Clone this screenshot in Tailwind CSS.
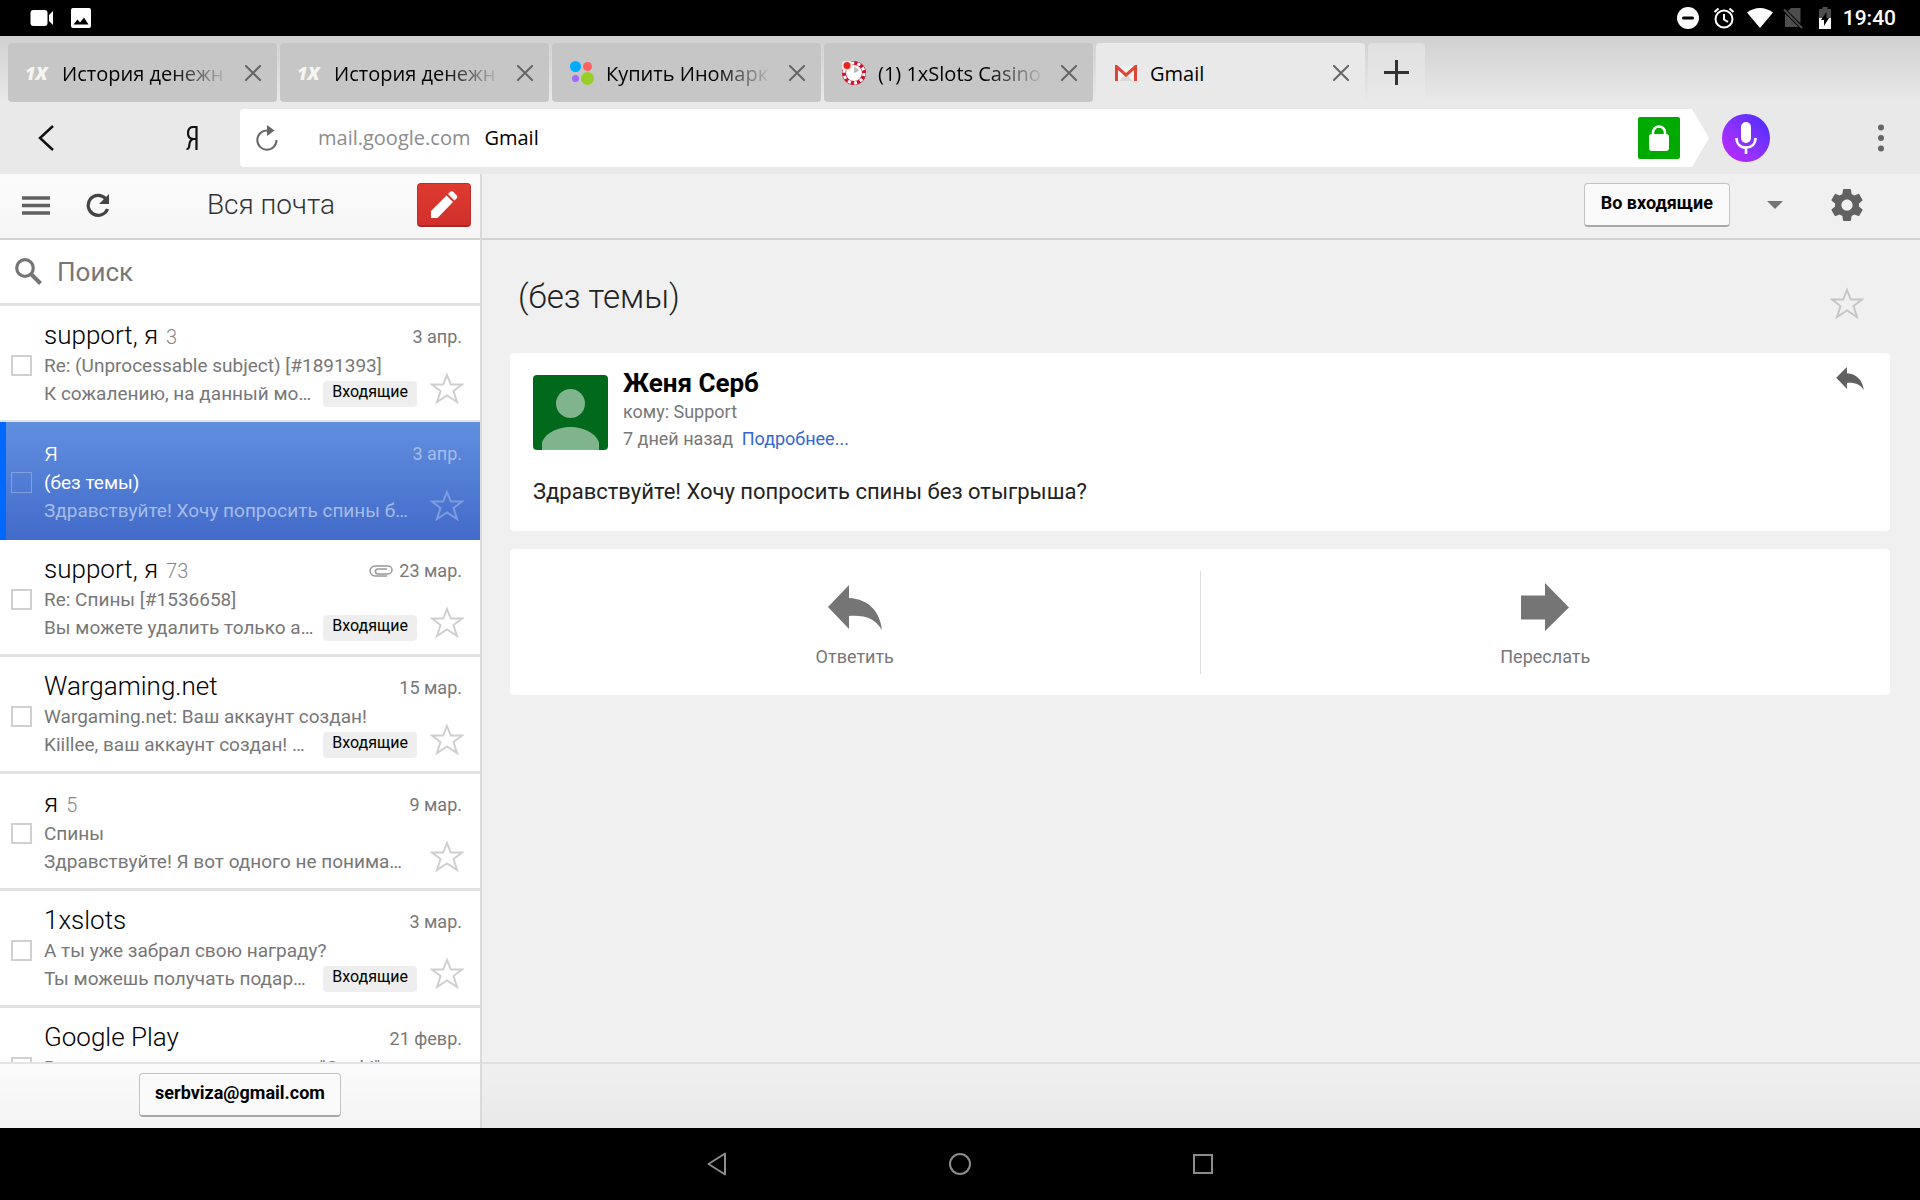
<!DOCTYPE html>
<html lang="ru">
<head>
    <meta charset="UTF-8">
    <meta name="viewport" content="width=device-width, initial-scale=1.0">
    <title>Gmail</title>
    <script src="https://cdn.jsdelivr.net/npm/@tailwindcss/browser@4"></script>
</head>
<body class="h-screen flex flex-col overflow-hidden bg-[#f0f0f0] font-['Roboto',sans-serif] text-black">

    <!-- Status bar -->
    <div class="h-9 shrink-0 bg-black text-white flex items-center justify-between pl-[30px] pr-6">
        <div class="flex items-center gap-[17px]">
            <svg class="w-6 h-4" viewBox="0 0 24 16" fill="#fff"><rect x="0.5" y="0" width="17" height="16" rx="3"/><path d="M19 5l4-4v14l-4-4z"/></svg>
            <svg class="w-5 h-5" viewBox="0 0 20 20"><rect width="20" height="20" rx="2" fill="#fff"/><path d="M2.500 16.500l4-5 2.500 3 4-5 4.500 7z" fill="#000"/></svg>
        </div>
        <div class="flex items-center">
            <svg class="w-[22px] h-[22px]" viewBox="0 0 22 22"><circle cx="11" cy="11" r="11" fill="#fff"/><rect x="5" y="9.500" width="12" height="3" rx="1.500" fill="#000"/></svg>
            <svg class="w-[22px] h-[22px] ml-3.5" viewBox="0 0 22 22" fill="none" stroke="#fff" stroke-width="2"><circle cx="11" cy="12" r="8.500"/><path d="M11 7v5.500l4 2.500M1.500 5l4-3.500M20.500 5l-4-3.500"/></svg>
            <svg class="w-[26px] h-5 ml-3" viewBox="0 0 26 20"><path d="M0 4.500C8-1.500 18-1.500 26 4.500L13 20z" fill="#fff"/></svg>
            <svg class="w-5 h-[22px] ml-2.5" viewBox="0 0 20 22"><path d="M8 1h9.500v15.500L5 4zM2 6.500L15.500 20H2z" fill="#4d4d4d"/><path d="M1 2.500L19 21" stroke="#4d4d4d" stroke-width="2"/></svg>
            <svg class="w-3 h-[22px] ml-4" viewBox="0 0 12 22"><path d="M3.500 0h5v2H12v9H0V2h3.500z" fill="#4d4d4d"/><path d="M0 11h12v11H0z" fill="#fff"/><path d="M7.500 5L2 13h3v6l5-8H7.500z" fill="#000"/></svg>
            <span class="ml-3 text-[21px] font-medium leading-9">19:40</span>
        </div>
    </div>

    <!-- Tabs -->
    <nav class="h-[66px] shrink-0 flex items-start gap-[3px] pl-2 pt-[7px] bg-linear-to-b from-[#d0d0d0] to-[#e9e9e9] font-['Open_Sans',sans-serif] text-xl font-medium">
        <div class="w-[269px] h-[59px] rounded bg-[#c6c6c6] flex items-center pl-[17px]">
            <span class="w-6 mr-[13px] shrink-0 text-lg font-extrabold italic text-[#f7f5ee] leading-6">1X</span>
            <a href="#" class="flex-1 min-w-0 pt-0.5 overflow-hidden whitespace-nowrap [mask-image:linear-gradient(to_right,black_65%,transparent)]">История денежн</a>
            <button class="w-12 h-12 flex items-center justify-center" aria-label="Закрыть"><svg class="w-4 h-4" viewBox="0 0 16 16"><path d="M0 0l16 16M16 0L0 16" stroke="#666" stroke-width="2"/></svg></button>
        </div>
        <div class="w-[269px] h-[59px] rounded bg-[#c6c6c6] flex items-center pl-[17px]">
            <span class="w-6 mr-[13px] shrink-0 text-lg font-extrabold italic text-[#f7f5ee] leading-6">1X</span>
            <a href="#" class="flex-1 min-w-0 pt-0.5 overflow-hidden whitespace-nowrap [mask-image:linear-gradient(to_right,black_65%,transparent)]">История денежн</a>
            <button class="w-12 h-12 flex items-center justify-center" aria-label="Закрыть"><svg class="w-4 h-4" viewBox="0 0 16 16"><path d="M0 0l16 16M16 0L0 16" stroke="#666" stroke-width="2"/></svg></button>
        </div>
        <div class="w-[269px] h-[59px] rounded bg-[#c6c6c6] flex items-center pl-[18px]">
            <svg class="w-6 h-6 mr-3 shrink-0" viewBox="0 0 24 24"><circle cx="5.500" cy="5.500" r="5.500" fill="#00aaff"/><circle cx="17.500" cy="5.500" r="4.500" fill="#ff6163"/><circle cx="5.500" cy="17.500" r="3.500" fill="#a169f7"/><circle cx="17.500" cy="17.500" r="6.500" fill="#97cf26"/></svg>
            <a href="#" class="flex-1 min-w-0 pt-0.5 overflow-hidden whitespace-nowrap [mask-image:linear-gradient(to_right,black_65%,transparent)]">Купить Иномарк</a>
            <button class="w-12 h-12 flex items-center justify-center" aria-label="Закрыть"><svg class="w-4 h-4" viewBox="0 0 16 16"><path d="M0 0l16 16M16 0L0 16" stroke="#666" stroke-width="2"/></svg></button>
        </div>
        <div class="w-[269px] h-[59px] rounded bg-[#c6c6c6] flex items-center pl-[18px]">
            <svg class="w-6 h-6 mr-3 shrink-0" viewBox="0 0 24 24"><circle cx="12" cy="12" r="10" fill="#fff" stroke="#d0112f" stroke-width="4"/><circle cx="12" cy="12" r="10" fill="none" stroke="#fff" stroke-width="3" stroke-dasharray="3.100 3.180"/><path d="M12 12V6a6 6 0 0 1 5 4z" fill="#bbb"/><rect width="10" height="9" rx="2" fill="#f3e6e6"/><circle cx="5" cy="4.500" r="3.500" fill="#e8251c"/></svg>
            <a href="#" class="flex-1 min-w-0 pt-0.5 overflow-hidden whitespace-nowrap [mask-image:linear-gradient(to_right,black_65%,transparent)]">(1) 1xSlots Casino</a>
            <button class="w-12 h-12 flex items-center justify-center" aria-label="Закрыть"><svg class="w-4 h-4" viewBox="0 0 16 16"><path d="M0 0l16 16M16 0L0 16" stroke="#666" stroke-width="2"/></svg></button>
        </div>
        <div class="w-[269px] h-[59px] rounded-t bg-[#e9e9e9] flex items-center pl-[18px]">
            <svg class="w-6 h-6 mr-3 shrink-0" viewBox="0 0 24 24"><path d="M3 5h18v15H3z" fill="#f3f3f3"/><path d="M5 20l7-7 7 7z" fill="#d9d9d9"/><path d="M1 20V4h2l9 8 9-8h2v16h-3V9l-8 7-8-7v11z" fill="#dd4436"/></svg>
            <a href="#" class="flex-1 min-w-0 pt-0.5">Gmail</a>
            <button class="w-12 h-12 flex items-center justify-center" aria-label="Закрыть"><svg class="w-4 h-4" viewBox="0 0 16 16"><path d="M0 0l16 16M16 0L0 16" stroke="#666" stroke-width="2"/></svg></button>
        </div>
        <button class="w-[57px] h-[58px] rounded-t bg-linear-to-b from-[#e0e0e0] to-[#e9e9e9] flex items-center justify-center" aria-label="Новая вкладка">
            <svg class="w-[25px] h-[25px]" viewBox="0 0 25 25"><path d="M12.500 0v25M0 12.500h25" stroke="#333" stroke-width="3"/></svg>
        </button>
    </nav>

    <!-- Address bar -->
    <div class="h-[72px] shrink-0 bg-[#e9e9e9] flex items-center py-[7px] font-['Open_Sans',sans-serif] text-xl">
        <button class="pl-[38px] pr-4" aria-label="Назад"><svg class="w-4 h-[26px]" viewBox="0 0 16 26" fill="none"><path d="M15 1L2 13l13 12" stroke="#111" stroke-width="2.500"/></svg></button>
        <button class="w-[170px] pl-[73px]" aria-label="Яндекс"><svg class="w-3 h-6 mx-auto" viewBox="0 0 12 24" fill="none" stroke="#111" stroke-width="2.200"><path d="M10.500 24V1H7.500C4 1 2 3 2 7s2 6 5.500 6h3M7 13c-3 1-3.500 3-3.700 6-.2 3-.6 4-2.800 4"/></svg></button>
        <div class="flex-1 h-[58px] bg-white rounded-l-sm flex items-center pl-4 [clip-path:polygon(0_0,calc(100%-17px)_0,100%_50%,calc(100%-17px)_100%,0_100%)]">
            <button aria-label="Обновить"><svg class="w-[22px] h-[26px]" viewBox="0 0 22 26" fill="none"><path d="M11 5.500A9.600 9.600 0 1 0 20.500 15" stroke="#666" stroke-width="2"/><path d="M11 0l7.500 5.500L11 11z" fill="#666"/></svg></button>
            <span class="ml-10 text-[#8c8c8c]">mail.google.com</span>
            <span class="ml-3.5 font-medium">Gmail</span>
            <span class="ml-auto mr-[29px] w-[42px] h-[42px] rounded-xs bg-[#00aa00] flex items-center justify-center">
                <svg class="w-5 h-[26px]" viewBox="0 0 20 26"><rect y="9" width="20" height="17" rx="3" fill="#fff"/><path d="M4 10V7.500a6 6 0 0 1 12 0V10" fill="none" stroke="#fff" stroke-width="2.500"/></svg>
            </span>
        </div>
        <button class="ml-[13px] w-12 h-12 rounded-full bg-linear-to-tr from-[#c61fff] to-[#4028ff] flex items-center justify-center" aria-label="Голосовой поиск">
            <svg class="w-[22px] h-8" viewBox="0 0 22 32" fill="none" stroke="#fff" stroke-width="2.500"><rect x="6" y="0" width="10" height="21" rx="5" fill="#fff" stroke="none"/><path d="M1.500 16c0 6 4 9.500 9.500 9.500s9.500-3.500 9.500-9.500M11 25v7" stroke-width="2.600"/></svg>
        </button>
        <button class="ml-[108px] mr-9" aria-label="Меню"><svg class="w-1.5 h-7" viewBox="0 0 6 28" fill="#666"><circle cx="3" cy="3.500" r="3"/><circle cx="3" cy="14" r="3"/><circle cx="3" cy="24.500" r="3"/></svg></button>
    </div>

    <div class="flex-1 min-h-0 flex">
        <!-- Mail list -->
        <aside class="w-1/4 shrink-0 bg-white flex flex-col">
            <header class="h-[66px] shrink-0 flex items-center pl-[22px] pr-[9px] pb-0.5 border-b-2 border-[#d2d2d2] bg-linear-to-b from-[#fbfbfc] to-[#f6f6f6]">
                <button aria-label="Ярлыки"><svg class="w-7 h-[19px]" viewBox="0 0 28 19"><path d="M0 2h28M0 9.500h28M0 17h28" stroke="#616161" stroke-width="3.500"/></svg></button>
                <button class="ml-9" aria-label="Обновить"><svg class="w-6 h-6" viewBox="0 0 24 24" fill="none"><path d="M19.500 5.500A10 10 0 1 0 21.500 16" stroke="#444" stroke-width="3.200"/><path d="M23 1v10H13z" fill="#444"/></svg></button>
                <h1 class="flex-1 text-center pl-[15px] text-[28px] font-light text-[#333] leading-8">Вся почта</h1>
                <button class="w-[54px] h-11 rounded border border-[#b5322b] border-b-2 border-b-[#a52a24] bg-linear-to-b from-[#df3a30] to-[#d0302c] flex items-center justify-center" aria-label="Написать">
                    <svg class="w-7 h-7" viewBox="0 0 28 28" fill="#fff"><path d="M1 27v-7L16.500 4.500l6.500 6.500L7.500 27zM18 3l2-2c1-1 2.500-1 3.500 0l3 3.200c1 1 1 2.300 0 3.300l-2 2z"/></svg>
                </button>
            </header>
            <div class="h-[66px] shrink-0 flex items-center pl-[15px] border-b-3 border-[#e2e2e2]">
                <svg class="w-[27px] h-[27px]" viewBox="0 0 27 27" fill="none" stroke="#757575"><circle cx="10" cy="10" r="8.300" stroke-width="3.200"/><path d="M16 16l9.500 9.500" stroke-width="4"/></svg>
                <input type="text" placeholder="Поиск" aria-label="Поиск" class="ml-[15px] flex-1 min-w-0 h-11 text-[26px] outline-none placeholder:text-[#777]">
            </div>
            <ul id="mailList" class="flex-1 min-h-0 overflow-hidden"></ul>
            <footer class="h-[66px] shrink-0 flex items-center justify-center pb-0.5 border-t-2 border-[#e4e4e4] bg-linear-to-b from-[#fbfbfc] to-[#f4f4f4]">
                <button class="h-11 px-[15px] pb-1 rounded border border-[#c4c4c4] border-b-2 border-b-[#a8a8a8] bg-[#fafafa] text-lg font-bold leading-6">serbviza@gmail.com</button>
            </footer>
        </aside>

        <!-- Message -->
        <main class="flex-1 min-w-0 flex flex-col border-l-2 border-[#dadada] bg-[#f0f0f0]">
            <header class="h-[66px] shrink-0 flex items-center justify-end pr-[57px] pb-0.5 border-b-2 border-[#d2d2d2]">
                <button class="h-11 px-4 pb-1 rounded border border-[#c4c4c4] border-b-2 border-b-[#a8a8a8] bg-[#fafafa] text-lg font-bold leading-6">Во входящие</button>
                <button class="ml-[37px]" aria-label="Ещё"><svg class="w-4 h-2" viewBox="0 0 16 8"><path d="M0 0h16L8 8z" fill="#757575"/></svg></button>
                <button class="ml-12" aria-label="Настройки">
                    <svg class="w-8 h-8" viewBox="2 2 20 20" fill="#616161"><path d="M19.430 12.980c.04-.32.07-.64.07-.98s-.03-.66-.07-.98l2.110-1.650c.19-.15.24-.42.12-.64l-2-3.460c-.12-.22-.39-.3-.61-.22l-2.490 1c-.52-.4-1.080-.73-1.690-.98l-.38-2.650C14.460 2.180 14.250 2 14 2h-4c-.25 0-.46.18-.49.42l-.38 2.650c-.61.25-1.170.59-1.690.98l-2.490-1c-.23-.09-.49 0-.61.22l-2 3.460c-.13.22-.07.49.12.64l2.110 1.650c-.04.32-.07.65-.07.98s.03.66.07.98l-2.110 1.650c-.19.15-.24.42-.12.64l2 3.460c.12.22.39.3.61.22l2.490-1c.52.4 1.080.73 1.690.98l.38 2.650c.03.24.24.42.49.42h4c.25 0 .46-.18.49-.42l.38-2.650c.61-.25 1.170-.59 1.690-.98l2.490 1c.23.09.49 0 .61-.22l2-3.460c.12-.22.07-.49-.12-.64l-2.110-1.650zM12 15.500c-1.930 0-3.500-1.570-3.500-3.500s1.570-3.500 3.500-3.500 3.500 1.570 3.500 3.500-1.570 3.500-3.500 3.500z"/></svg>
                </button>
            </header>

            <section class="flex-1 min-h-0 overflow-hidden pl-7 pr-[30px]">
                <div class="h-[113px] flex items-center justify-between pl-2 pr-[26px]">
                    <h2 class="text-[33px] font-light text-[#222] leading-10">(без темы)</h2>
                    <button class="mt-3" aria-label="Пометить"><svg class="w-[34px] h-8" viewBox="0 0 34 32" fill="none" stroke="#c6c6c6" stroke-width="2"><path d="M17 3l3.800 9.500H32l-8.500 6.500 3.500 11-10-6.500L7 30l3.500-11L2 12.500h11.200z"/></svg></button>
                </div>

                <article class="h-[178px] rounded bg-white pl-[23px] pr-[26px] pt-3.5">
                    <div class="flex items-start">
                        <svg class="mt-2 w-[75px] h-[75px] rounded" viewBox="0 0 75 75"><rect width="75" height="75" fill="#00691c"/><g fill="#80b48d"><circle cx="37.500" cy="28.500" r="14.500"/><path d="M9 75v-7c2-9 15-16 28.500-16S64 59 66 68v7z"/></g></svg>
                        <div class="ml-[15px] flex-1">
                            <p class="text-[26px] font-bold leading-8">Женя Серб</p>
                            <p class="text-lg leading-[26px] text-[#777]">кому: Support</p>
                            <p class="text-lg leading-[27px] text-[#777]">7 дней назад <a href="#" class="ml-1 text-[#3367d6]">Подробнее...</a></p>
                        </div>
                        <button aria-label="Ответить"><svg class="w-7 h-[23px]" viewBox="0 0 54 45"><path d="M0 21L21 0v12c20 1 31 15 33 33-7-11-16-15-33-14v12z" fill="#616161"/></svg></button>
                    </div>
                    <p class="mt-6 text-[22px] leading-8 text-[#222]">Здравствуйте! Хочу попросить спины без отыгрыша?</p>
                </article>

                <div class="mt-[18px] h-[146px] rounded bg-white flex items-center divide-x divide-[#dedede] text-lg text-[#777]">
                    <button class="flex-1 h-[103px] flex flex-col items-center pt-3">
                        <svg class="w-[54px] h-12" viewBox="0 0 54 48"><path d="M0 24L21 2v13c20 1 31 14 33 32-7-11-16-15-33-14v13z" fill="#757575"/></svg>
                        <span class="mt-3 leading-7">Ответить</span>
                    </button>
                    <button class="flex-1 h-[103px] flex flex-col items-center pt-3">
                        <svg class="w-12 h-12" viewBox="0 0 48 48"><path d="M0 12.500h24V0l24 24.500L24 48V36.500H0z" fill="#757575"/></svg>
                        <span class="mt-3 leading-7">Переслать</span>
                    </button>
                </div>
            </section>

            <footer class="h-[66px] shrink-0 border-t-2 border-[#dfdfdf] bg-linear-to-b from-[#f0f0f0] to-[#e9e9e9]"></footer>
        </main>
    </div>

    <!-- System navigation -->
    <div class="h-[72px] shrink-0 bg-black flex items-center justify-center gap-[221px]">
        <button aria-label="Назад"><svg class="w-[22px] h-6" viewBox="0 0 22 24" fill="none"><path d="M19 1.500v21L2.500 12z" stroke="#8c8c8c" stroke-width="2" stroke-linejoin="round"/></svg></button>
        <button aria-label="Домой"><svg class="w-[22px] h-[22px]" viewBox="0 0 22 22" fill="none"><circle cx="11" cy="11" r="10" stroke="#8c8c8c" stroke-width="2"/></svg></button>
        <button aria-label="Обзор"><svg class="w-[22px] h-5" viewBox="0 0 22 20" fill="none"><rect x="2" y="1" width="18" height="18" stroke="#8c8c8c" stroke-width="2"/></svg></button>
    </div>

    <script>
        const mails = [
            { from: "support, я", count: "3", date: "3 апр.", subject: "Re: (Unprocessable subject) [#1891393]", text: "К сожалению, на данный мо…", inbox: true },
            { from: "я", count: "", date: "3 апр.", subject: "(без темы)", text: "Здравствуйте! Хочу попросить спины б…", selected: true },
            { from: "support, я", count: "73", date: "23 мар.", subject: "Re: Спины [#1536658]", text: "Вы можете удалить только а…", inbox: true, clip: true },
            { from: "Wargaming.net", count: "", date: "15 мар.", subject: "Wargaming.net: Ваш аккаунт создан!", text: "Kiillee, ваш аккаунт создан! …", inbox: true },
            { from: "я", count: "5", date: "9 мар.", subject: "Спины", text: "Здравствуйте! Я вот одного не понима…" },
            { from: "1xslots", count: "", date: "3 мар.", subject: "А ты уже забрал свою награду?", text: "Ты можешь получать подар…", inbox: true },
            { from: "Google Play", count: "", date: "21 февр.", subject: "Вам нравится новое название \"Cook!\"", text: "Оцените приложение" }
        ];

        const mailList = document.getElementById("mailList");

        // Add one message to the list
        function addMail(mail) {
            const li = document.createElement("li");
            const sel = mail.selected;
            li.className = sel
                ? "-mt-px pt-px h-[118px] flex items-start pl-[5px] pr-4 border-l-6 border-[#0068ff] bg-linear-to-b from-[#618fdf] to-[#426bc9] text-white"
                : "h-[117px] flex items-start pl-[11px] pr-4 border-b-3 border-[#e2e2e2]";

            const gray = sel ? "text-[#a6bce8]" : "text-[#777]";
            const box = sel ? "border border-[#7f9fe0]" : "border-2 border-[#d0d0d0]";
            const star = sel ? "#7d9ce0" : "#cfcfcf";
            const clip = mail.clip ? `<svg class="w-6 h-3 mr-1.5" viewBox="0 0 24 12" fill="none" stroke="#999" stroke-width="1.500"><path d="M18 11H6a5 5 0 0 1 0-10h13a4 4 0 0 1 0 8H9a2.500 2.500 0 0 1 0-5h9"/></svg>` : "";
            const label = mail.inbox ? `<span class="shrink-0 mt-px h-[26px] px-[9px] rounded-sm bg-[#eee] text-black text-base leading-[22px]">Входящие</span>` : "";

            li.innerHTML = `
                <input type="checkbox" aria-label="${mail.from}" class="appearance-none shrink-0 mt-[49px] w-[21px] h-[21px] ${box}">
                <div class="ml-3 flex-1 min-w-0 pt-3">
                    <div class="flex items-center pr-0.5">
                        <span class="text-[26px] font-light leading-[34px]">${mail.from}</span>
                        <span class="ml-2 pt-1 text-xl leading-7 font-light text-[#888]">${mail.count}</span>
                        <span class="ml-auto pt-[3px] flex items-center text-lg leading-7 ${gray}">${clip}${mail.date}</span>
                    </div>
                    <div class="flex items-end text-[19px] leading-7">
                        <div class="flex-1 min-w-0">
                            <p class="truncate ${sel ? "" : gray}">${mail.subject}</p>
                            <div class="flex items-start"><p class="flex-1 min-w-0 truncate ${gray}">${mail.text}</p>${label}</div>
                        </div>
                        <button class="ml-[13px] mb-1" aria-label="Пометить"><svg class="w-[34px] h-8" viewBox="0 0 34 32" fill="none" stroke="${star}" stroke-width="2"><path d="M17 3l3.800 9.500H32l-8.500 6.500 3.500 11-10-6.500L7 30l3.500-11L2 12.500h11.200z"/></svg></button>
                    </div>
                </div>
            `;

            mailList.appendChild(li);
        }

        mails.forEach(addMail);
    </script>

</body>
</html>
